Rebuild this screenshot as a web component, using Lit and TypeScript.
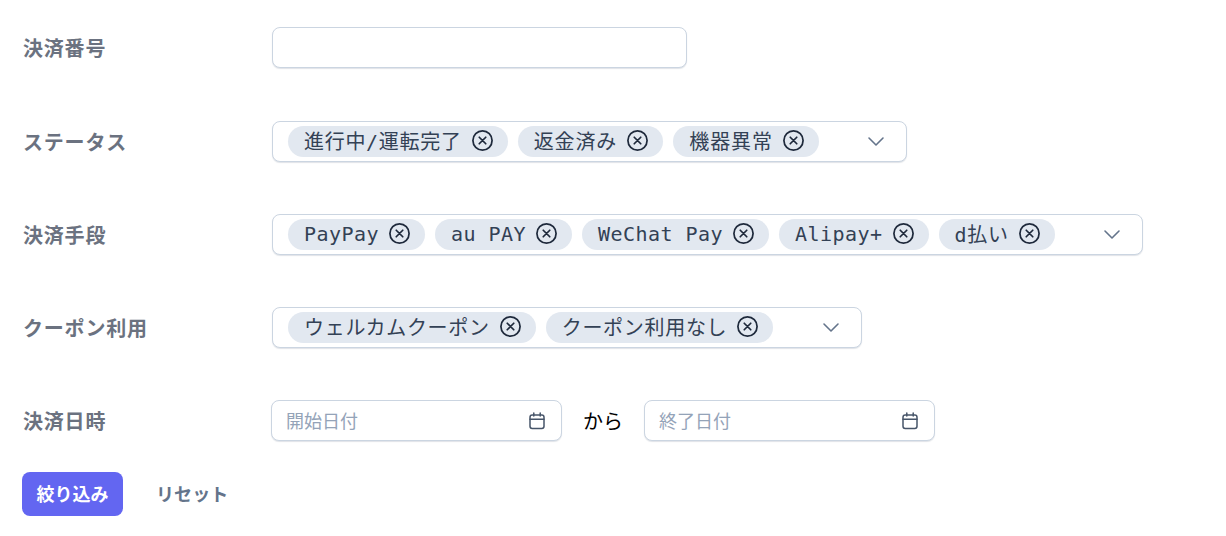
import { LitElement, html, css } from "lit";
import { customElement } from "lit/decorators.js";

const closeIcon = html`<svg class="x" viewBox="0 0 24 24" fill="none" stroke="currentColor" stroke-width="1.8" stroke-linecap="round"><circle cx="12" cy="12" r="10"></circle><path d="M8.6 8.6l6.8 6.8M15.4 8.6l-6.8 6.8"></path></svg>`;
const chevron = html`<svg class="chev" viewBox="0 0 20 20" fill="none" stroke="currentColor" stroke-width="1.6" stroke-linecap="round" stroke-linejoin="round"><path d="M3 6l7 7 7-7"></path></svg>`;
const calendar = html`<svg class="cal" viewBox="0 0 18 18" fill="none" stroke="currentColor" stroke-width="1.5" stroke-linecap="round" stroke-linejoin="round"><rect x="2" y="3" width="14" height="13.5" rx="2.2"></rect><path d="M2 7.2h14M5.8 1v3M12.2 1v3"></path></svg>`;

type Chip = [string, "ja" | "ja2" | "lat" | "mix"];

@customElement("app-root")
export class AppRoot extends LitElement {
  static styles = css`
    :host { display: block; width: 1226px; height: 536px; background: #fff; box-sizing: border-box; padding: 27px 0 0 22px;
      font-family: "Inter", "Noto Sans CJK JP", sans-serif; overflow: hidden; }
    .row { display: flex; align-items: center; height: 41px; margin-bottom: 52px; }
    .row.first { margin-bottom: 53px; }
    .row.last { margin-bottom: 31px; }
    .label { width: 250px; flex: none; padding: 0 0 1px 1px; box-sizing: border-box; font-size: 20px; font-weight: 700; letter-spacing: .8px; color: #6b7280; }
    .box { box-sizing: border-box; height: 41px; border: 1px solid #cbd5e1; border-radius: 8px; background: #fff; box-shadow: 0 1px 1px rgba(100,116,139,.2); }
    .select { display: flex; align-items: center; justify-content: space-between; padding: 0 20px 0 15px; }
    .chips { display: flex; gap: 10px; }
    .chip { box-sizing: border-box; display: flex; align-items: center; height: 31px; padding: 0 14px 2px 16px; gap: 9px; border-radius: 16px; background: #e2e8f0; color: #334155;
      font-family: "DejaVu Sans Mono", "Noto Sans CJK JP", monospace; font-size: 20px; white-space: nowrap; }
    .ja { letter-spacing: .9px; }
    .ja2 { letter-spacing: .7px; }
    .mix { letter-spacing: .7px; }
    .lat { letter-spacing: .46px; }
    .x { width: 23px; height: 23px; flex: none; color: #1e293b; }
    .chev { width: 20px; height: 20px; flex: none; color: #64748b; }
    .w415 { width: 415px; } .w635 { width: 635px; } .w871 { width: 871px; } .w590 { width: 590px; }
    .dates { display: flex; align-items: center; margin-left: -1px; }
    .date { width: 291px; display: flex; align-items: center; justify-content: space-between; padding: 0 15px 0 14px; font-size: 18px; color: #94a3b8; }
    .date span { padding-bottom: 2px; }
    .cal { width: 18px; height: 18px; color: #475569; }
    .sep { width: 82px; text-align: center; font-size: 20px; color: #000; }
    .actions { display: flex; align-items: center; gap: 33px; }
    .primary { box-sizing: border-box; width: 101px; height: 44px; border: 0; border-radius: 8px; background: #6366f1; color: #fff; font: 700 18px "Inter", "Noto Sans CJK JP", sans-serif; padding: 0 0 2px; }
    .reset { border: 0; background: none; color: #64748b; font: 700 18px "Inter", "Noto Sans CJK JP", sans-serif; letter-spacing: .1px; padding: 0 0 2px; }
  `;

  private chips(items: Chip[]) {
    return html`<div class="chips">${items.map(([t, c]) => html`<span class="chip ${c}">${t}${closeIcon}</span>`)}</div>`;
  }

  render() {
    return html`
      <div class="row first"><div class="label">決済番号</div><div class="box w415"></div></div>
      <div class="row"><div class="label">ステータス</div><div class="box select w635">${this.chips([["進行中/運転完了", "mix"], ["返金済み", "ja"], ["機器異常", "ja"]])}${chevron}</div></div>
      <div class="row"><div class="label">決済手段</div><div class="box select w871">${this.chips([["PayPay", "lat"], ["au PAY", "lat"], ["WeChat Pay", "lat"], ["Alipay+", "lat"], ["d払い", "mix"]])}${chevron}</div></div>
      <div class="row"><div class="label">クーポン利用</div><div class="box select w590">${this.chips([["ウェルカムクーポン", "ja2"], ["クーポン利用なし", "ja2"]])}${chevron}</div></div>
      <div class="row last"><div class="label">決済日時</div>
        <div class="dates">
          <div class="box date"><span>開始日付</span>${calendar}</div>
          <span class="sep">から</span>
          <div class="box date"><span>終了日付</span>${calendar}</div>
        </div>
      </div>
      <div class="actions"><button class="primary">絞り込み</button><button class="reset">リセット</button></div>
    `;
  }
}
